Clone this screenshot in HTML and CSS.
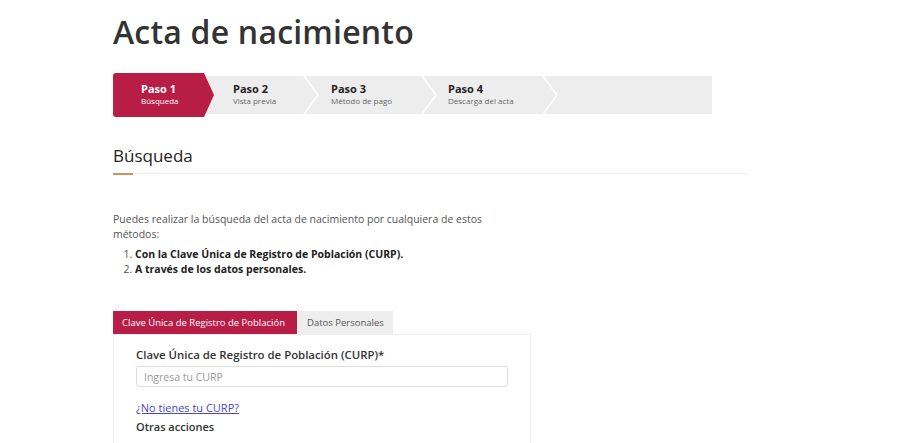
FILE: index.html
```html
<!DOCTYPE html>
<html lang="es">
<head>
    <meta charset="UTF-8">
    <meta name="viewport" content="width=device-width, initial-scale=1.0">
    <title>Acta de nacimiento</title>
    <link rel="stylesheet" href="styles.css">
</head>
<body>
    <div class="container">
        <h1 class="title">Acta de nacimiento</h1>

        <div class="steps">
            <div class="step step-active">
                <strong>Paso 1</strong>
                <span>Búsqueda</span>
            </div>
            <div class="step step-2">
                <strong>Paso 2</strong>
                <span>Vista previa</span>
            </div>
            <svg class="chevron" viewBox="0 0 16 38" width="16" height="38"><polyline points="1,0 15,19 1,38" fill="none" stroke="#fff" stroke-width="1.6"/></svg>
            <div class="step step-3">
                <strong>Paso 3</strong>
                <span>Método de pago</span>
            </div>
            <svg class="chevron" viewBox="0 0 16 38" width="16" height="38"><polyline points="1,0 15,19 1,38" fill="none" stroke="#fff" stroke-width="1.6"/></svg>
            <div class="step step-4">
                <strong>Paso 4</strong>
                <span>Descarga del acta</span>
            </div>
            <svg class="chevron" viewBox="0 0 16 38" width="16" height="38"><polyline points="1,0 15,19 1,38" fill="none" stroke="#fff" stroke-width="1.6"/></svg>
        </div>

        <div class="section-head">
            <h2>Búsqueda</h2>
            <div class="rule"><span></span></div>
        </div>

        <p class="intro">Puedes realizar la búsqueda del acta de nacimiento por cualquiera de estos métodos:</p>
        <ol class="methods">
            <li><b>Con la Clave Única de Registro de Población (CURP).</b></li>
            <li><b>A través de los datos personales.</b></li>
        </ol>

        <div class="tabs">
            <div class="tab tab-active">Clave Única de Registro de Población</div>
            <div class="tab">Datos Personales</div>
        </div>
        <div class="panel">
            <label class="field-label" for="curp">Clave Única de Registro de Población (CURP)*</label>
            <input type="text" id="curp" class="field" placeholder="Ingresa tu CURP">
            <a href="#" class="help-link">¿No tienes tu CURP?</a>
            <div class="other">Otras acciones</div>
        </div>
    </div>
</body>
</html>
```

FILE: styles.css
```css
body {
    margin: 0;
    font-family: "Open Sans", Arial, sans-serif;
    color: #333;
    background: #fff;
}
.container {
    padding-left: 113px;
    width: 635px;
}
.title {
    font-weight: 600;
    font-size: 32px;
    color: #333;
    margin: 0;
    padding-top: 10px;
    line-height: 44px;
    letter-spacing: 0.2px;
}

/* stepper */
.steps {
    display: flex;
    width: 599px;
    height: 38px;
    margin-top: 22px;
    background: #ededed;
}
.step {
    display: flex;
    flex-direction: column;
    justify-content: center;
    padding-bottom: 3px;
    font-size: 8px;
    color: #666;
    box-sizing: border-box;
}
.step strong {
    font-size: 11px;
    color: #222;
    line-height: 13px;
}
.step-active {
    width: 101px;
    height: 44px;
    margin-top: -3px;
    padding-left: 28px;
    background: #b81d46;
    color: #fff;
    clip-path: polygon(0 0, 91px 0, 100% 50%, 91px 100%, 0 100%);
    border-radius: 3px 0 0 3px;
}
.step-active strong {
    color: #fff;
}
.step-2 {
    width: 89px;
    padding-left: 19px;
}
.step-3 {
    width: 102px;
    padding-left: 12px;
}
.step-4 {
    width: 105px;
    padding-left: 11px;
}
.chevron {
    display: block;
    flex: none;
}

/* section heading */
.section-head {
    margin-top: 30px;
}
.section-head h2 {
    font-weight: 400;
    font-size: 17px;
    color: #222;
    margin: 0;
    line-height: 24px;
}
.rule {
    margin-top: 5px;
    height: 1px;
    background: #eee;
}
.rule span {
    display: block;
    width: 20px;
    height: 2px;
    background: #c8956a;
}

.intro {
    font-size: 10.5px;
    line-height: 15px;
    color: #555;
    margin: 38px 0 0;
    width: 390px;
}
.methods {
    margin: 5px 0 0;
    padding-left: 22px;
    font-size: 10.5px;
    line-height: 15px;
    color: #555;
}
.methods b {
    color: #222;
}

/* tabs */
.tabs {
    display: flex;
    margin-top: 34px;
    gap: 1px;
}
.tab {
    font-size: 9.5px;
    height: 23px;
    line-height: 23px;
    padding: 0 9px;
    background: #eee;
    color: #555;
}
.tab-active {
    background: #b81d46;
    color: #fff;
    width: 184px;
    box-sizing: border-box;
}
.panel {
    width: 418px;
    box-sizing: border-box;
    border: 1px solid #eee;
    border-bottom: none;
    padding: 12px 22px 20px;
}
.field-label {
    display: block;
    font-size: 11.4px;
    font-weight: 600;
    color: #333;
}
.field {
    display: block;
    width: 372px;
    height: 21px;
    margin-top: 4px;
    box-sizing: border-box;
    border: 1px solid #ddd;
    border-radius: 3px;
    padding: 0 7px;
    font-family: "Open Sans", Arial, sans-serif;
    font-size: 10.5px;
}
.field::placeholder {
    color: #999;
}
.help-link {
    display: inline-block;
    margin-top: 13px;
    font-size: 11px;
    color: #4747c9;
}
.other {
    margin-top: 2px;
    font-size: 11px;
    font-weight: 600;
    color: #333;
}
```
